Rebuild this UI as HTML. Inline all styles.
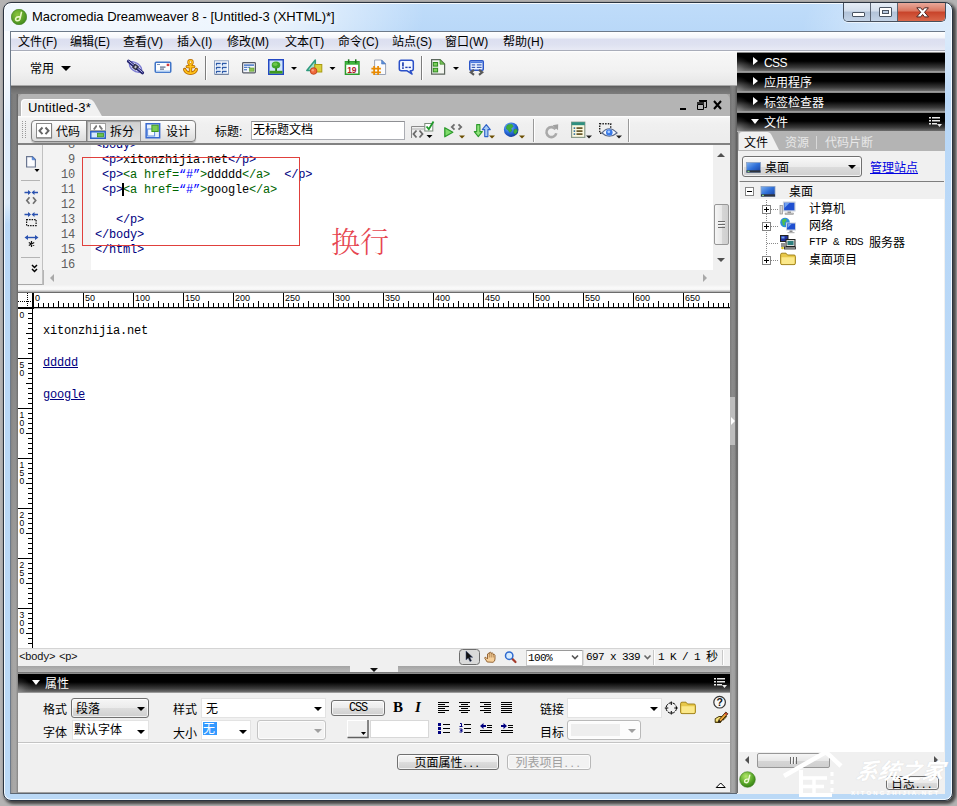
<!DOCTYPE html>
<html><head><meta charset="utf-8"><title>Macromedia Dreamweaver 8</title>
<style>
*{box-sizing:border-box;margin:0;padding:0}
html,body{width:957px;height:806px;overflow:hidden}
body{position:relative;background:#fff;font-family:"Liberation Sans","Noto Sans CJK SC",sans-serif;font-size:12px;color:#000}
.a{position:absolute}
.cj{font-family:"Liberation Sans","Noto Sans CJK SC",sans-serif;font-size:12px;white-space:nowrap;line-height:14px}
.mono{font-family:"Liberation Mono","Noto Sans CJK SC",monospace;white-space:pre}
#shadow{left:0;top:0;width:957px;height:806px;background:#b4b3b3}
#win{left:3px;top:2px;width:950px;height:799px;border:1px solid #2b3440;border-radius:8px;background:linear-gradient(180deg,rgba(255,255,255,.62) 0,rgba(255,255,255,.5) 172px,rgba(255,255,255,0) 194px) 0 28px/7px 100% no-repeat,radial-gradient(ellipse 150px 70px at 100% 26px,rgba(255,255,255,.5) 0,rgba(255,255,255,.35) 50%,rgba(255,255,255,0) 100%),radial-gradient(ellipse 330px 110px at 90px 12px,rgba(255,255,255,.82) 0,rgba(255,255,255,.72) 55%,rgba(255,255,255,0) 100%),linear-gradient(180deg,#bfdcfa 0,#b9d8f8 28px,#bbd9f6 100%);box-shadow:inset 0 0 0 1px rgba(255,255,255,.8),2px 2px 3px 1px rgba(0,0,0,.62)}
#client{left:10px;top:31px;width:935px;height:763px;background:#a2a1a0;border:1px solid #6d7a8a;border-bottom-color:#5c6672}

#title{left:32px;top:9px;font-size:12px;line-height:16px;white-space:nowrap;color:#000;text-shadow:0 0 6px #fff,0 0 6px #fff}
#appicon{left:11px;top:9px;width:16px;height:16px}
#capbtn{left:843px;top:3px;width:103px;height:19px;border:1px solid #46505e;border-top:none;border-radius:0 0 5px 5px;overflow:hidden;box-shadow:0 1px 0 rgba(255,255,255,.6)}
#capbtn div{position:absolute;top:0;height:18px}
#bmin{left:0;width:27px;background:linear-gradient(180deg,#e6edf6 0,#d3deec 45%,#b2c3d9 50%,#c3d3e6 100%);border-right:1px solid #5a6472}
#bmax{left:27px;width:27px;background:linear-gradient(180deg,#e6edf6 0,#d3deec 45%,#b2c3d9 50%,#c3d3e6 100%);border-right:1px solid #5a6472}
#bclose{left:54px;width:47px;background:linear-gradient(180deg,#e9a99b 0,#d9765f 45%,#c8432a 50%,#d9674a 100%)}
#menubar{left:11px;top:32px;width:934px;height:19px;background:linear-gradient(180deg,#ffffff 0,#f3f5fa 6px,#dcdff0 7px,#dfe2f1 13px,#e8eaf5 18px);border-bottom:1px solid #a9adba;box-shadow:0 1px 0 #f6f6fa}
#menubar span{position:absolute;top:3px;line-height:14px}
#insbar{left:11px;top:51px;width:726px;height:35px;background:linear-gradient(180deg,#ffffff 0,#f7f7f7 2px,#f1f1f1 60%,#e6e6e6 100%);border-bottom:1px solid #a8a8a8}

#title{font-size:13px}
/* insert bar */
#insbar .lbl{left:19px;top:11px}
.sep{width:1px;background:#8e8e8e;box-shadow:1px 0 0 #fff}
.dd{width:0;height:0;border-left:3px solid transparent;border-right:3px solid transparent;border-top:3px solid #000}
/* document window */
#doc{left:18px;top:93px;width:712px;height:573px;background:#b4b4b4;border-radius:7px 7px 0 0;overflow:hidden}
#doctab{left:3px;top:6px;width:90px;height:19px}
#doctb{left:0;top:23px;width:712px;height:29px;background:linear-gradient(180deg,#ffffff 0,#f4f4f4 2px,#f0f0f0 30%,#ececec 100%);border-bottom:2px solid #828282}
#grip{left:4px;top:5px;width:4px;height:18px;background:linear-gradient(90deg,#9a9a9a 0,#9a9a9a 1px,transparent 1px,transparent 3px,#9a9a9a 3px,#9a9a9a 4px);-webkit-mask-image:repeating-linear-gradient(180deg,#000 0,#000 1px,transparent 1px,transparent 2px);mask-image:repeating-linear-gradient(180deg,#000 0,#000 1px,transparent 1px,transparent 2px)}
#vbtns{left:13px;top:4px;width:165px;height:22px;border:1px solid #7f7f7f;border-radius:4px;background:linear-gradient(180deg,#fdfdfd 0,#ededed 50%,#dcdcdc 100%);box-shadow:0 1px 1px rgba(0,0,0,.25)}
#vbtns .p{left:54px;top:0;width:55px;height:20px;background:linear-gradient(180deg,#d0d0d0 0,#e2e2e2 100%);border-left:1px solid #7f7f7f;border-right:1px solid #9a9a9a;box-shadow:inset 1px 1px 1px rgba(0,0,0,.25)}
#vbtns span{position:absolute;top:4px;line-height:14px}
#tinput{left:233px;top:5px;width:154px;height:19px;background:#fff;border:1px solid #abadb3;border-top-color:#8e8f93;padding:1px 0 0 1px;line-height:14px}
#codetb{left:0;top:52px;width:25px;height:140px;background:#f0f0f0;border-right:1px solid #c0c0c0;border-bottom:1px solid #a8a8a8}
#gutter{left:25px;top:52px;width:48px;height:125px;background:#f3f3f3;overflow:hidden}
#code{left:73px;top:52px;width:622px;height:125px;background:#fff;overflow:hidden}
.ln{position:absolute;right:16px;width:30px;text-align:right;font-family:"Liberation Mono",monospace;font-size:12px;letter-spacing:-.2px;line-height:15px;color:#5e5e5e}
.cl{position:absolute;left:4px;font-family:"Liberation Mono",monospace;font-size:12px;letter-spacing:-.2px;line-height:15px;white-space:pre;color:#000}
.t{color:#000080}.g{color:#006400}.b{color:#0000ff}
#cvs{left:695px;top:52px;width:17px;height:125px;background:#f0f0f0}
#chs{left:26px;top:177px;width:686px;height:15px;background:#f0f0f0}
#split{left:0;top:192px;width:712px;height:7px;background:linear-gradient(180deg,#f2f2f2 0,#fafafa 3px,#f4f4f4 5px,#b8b8b8 6px)}
#hruler{left:0;top:199px;width:713px;height:17px;background:#fff;border-top:1px solid #404040;border-bottom:1px solid #404040;overflow:hidden}
#vruler{left:0;top:215px;width:15px;height:341px;background:#fff;border-right:1px solid #404040;overflow:hidden}
#design{left:15px;top:216px;width:697px;height:339px;background:#fff;overflow:hidden}
#design div{position:absolute;left:10px;font-family:"Liberation Mono",monospace;font-size:12px;letter-spacing:-.2px;line-height:15px;white-space:pre}
#design a{color:#000080;text-decoration:underline}
#status{left:0;top:555px;width:712px;height:18px;background:#f0f0f0;border-top:1px solid #d4d4d4}

/* right panel */
#rp{left:737px;top:52px;width:208px;height:742px;background:#f0f0f0;overflow:hidden}
.ph{position:absolute;left:0;width:208px;height:20px;background:radial-gradient(ellipse 15px 15px at 0 100%,rgba(150,150,150,.75) 0,rgba(120,120,120,.35) 55%,rgba(0,0,0,0) 100%),linear-gradient(180deg,#000 0,#000 45%,#3a3a3a 80%,#6e6e6e 100%);border-top:1px solid #8c8c8c;border-bottom:1px solid #9a9a9a;color:#fff}
.ph span{position:absolute;left:27px;top:3px;line-height:14px}
.ph i{position:absolute}
.tr{width:0;height:0;border-top:4.5px solid transparent;border-bottom:4.5px solid transparent;border-left:5.5px solid #fff;left:16px;top:4px}
.td{width:0;height:0;border-left:4.5px solid transparent;border-right:4.5px solid transparent;border-top:5.5px solid #fff;left:14px;top:6px}
#rtabs{left:0;top:79px;width:208px;height:20px;background:#b4b4b4}
#rsel{left:5px;top:104px;width:120px;height:21px;border:1px solid #707070;border-radius:3px;background:linear-gradient(180deg,#f8f8f8 0,#ebebeb 50%,#dcdcdc 51%,#d0d0d0 100%);box-shadow:inset 0 0 0 1px rgba(255,255,255,.7)}
#tree{left:2px;top:129px;width:205px;height:571px;background:#fff;border-top:1px solid #7e7e7e;border-left:1px solid #fbfbfb}
#tree .row{position:absolute;left:0;width:204px;height:17px}
#tree span{position:absolute;top:3px;line-height:15px}
#rhs{left:3px;top:700px;width:204px;height:17px;background:#f0f0f0}
/* props */
#props{left:18px;top:673px;width:712px;height:119px;background:#f0f0f0}
#props .ph{width:712px}
.lb{position:absolute;line-height:14px}
.cb{position:absolute;height:20px;background:#fff;border:1px solid #e3e3e3}
.cb .dd,.btn .dd{position:absolute;border-left-width:4px;border-right-width:4px;border-top-width:4px}
.btn{position:absolute;border:1px solid #707070;border-radius:3px;background:linear-gradient(180deg,#f6f6f6 0,#ebebeb 50%,#dddddd 51%,#cfcfcf 100%);box-shadow:inset 0 0 0 1px rgba(255,255,255,.7);text-align:center}
.sarr{position:absolute;width:0;height:0}
.thumb{position:absolute;border:1px solid #979797;border-radius:2px;background:linear-gradient(90deg,#f5f5f5 0,#e8e8e8 50%,#d6d6d6 51%,#cfcfcf 100%)}
.thumbh{position:absolute;border:1px solid #979797;border-radius:2px;background:linear-gradient(180deg,#f5f5f5 0,#e8e8e8 50%,#d6d6d6 51%,#cfcfcf 100%)}
#wshade{left:11px;top:86px;width:726px;height:8px;background:linear-gradient(180deg,#5a5a5a 0,#6e6e6e 35%,#7c7c7c 100%)}
#lgut{left:11px;top:94px;width:7px;height:699px;background:linear-gradient(90deg,rgba(0,0,0,.08) 0,rgba(0,0,0,0) 30%,rgba(0,0,0,0) 70%,rgba(0,0,0,.22) 100%),linear-gradient(180deg,#7e7e7e 0,#858585 250px,#a6a5a4 560px,#a9a8a7 100%)}
#vsplit{left:730px;top:86px;width:7px;height:707px;background:linear-gradient(90deg,rgba(0,0,0,.1) 0,rgba(0,0,0,0) 35%,rgba(0,0,0,.04) 65%,rgba(0,0,0,.3) 100%),linear-gradient(180deg,#808080 0,#8a8a8a 300px,#a4a4a4 580px,#a8a8a8 100%)}
#hsplit{left:18px;top:666px;width:712px;height:7px;background:linear-gradient(180deg,#a4a4a4 0,#b8b8b8 80%,#555 100%)}
</style></head><body>
<div id="shadow" class="a"></div>
<div id="win" class="a"></div>
<div id="client" class="a"></div>

<svg id="appicon" class="a" viewBox="0 0 15 15"><defs><radialGradient id="gi" cx="40%" cy="35%" r="70%"><stop offset="0" stop-color="#8cc63f"/><stop offset="1" stop-color="#3f8a1c"/></radialGradient></defs><circle cx="7.5" cy="7.5" r="7.2" fill="url(#gi)" stroke="#3a7a1a" stroke-width=".6"/><path d="M9.8 3.2 L8.3 9.6 Q7.6 11.4 5.6 11 Q3.9 10.5 4.4 8.9 Q5 7.4 6.8 7.4 L8.6 7.4" fill="none" stroke="#eaf7c8" stroke-width="1.5" stroke-linecap="round"/></svg>
<div id="title" class="a">Macromedia Dreamweaver 8 - [Untitled-3 (XHTML)*]</div>
<div id="capbtn" class="a"><div id="bmin"></div><div id="bmax"></div><div id="bclose"></div>
<svg class="a" style="left:0;top:0" width="101" height="18" viewBox="0 0 101 18"><rect x="8.500" y="9.500" width="12" height="4" rx=".5" fill="#fff" stroke="#4a5462"/><rect x="35.500" y="4.500" width="12" height="9" rx=".5" fill="#fff" stroke="#4a5462"/><rect x="38.500" y="7.500" width="6" height="3" fill="#b9cadf" stroke="#4a5462"/><path d="M72.800 4.800h3.900l1.900 2.400 1.900-2.400h3.900l-3.900 4.500 4 4.600h-4l-1.900-2.500-1.900 2.500h-4l4-4.600z" fill="#fff" stroke="#4a2420" stroke-width="1" stroke-linejoin="round"/></svg></div>
<div id="menubar" class="a cj"><span style="left:7px">文件(F)</span><span style="left:59px">编辑(E)</span><span style="left:112px">查看(V)</span><span style="left:166px">插入(I)</span><span style="left:216px">修改(M)</span><span style="left:274px">文本(T)</span><span style="left:327px">命令(C)</span><span style="left:381px">站点(S)</span><span style="left:434px">窗口(W)</span><span style="left:492px">帮助(H)</span></div>
<div id="insbar" class="a cj"><span class="a lbl">常用</span></div>

<div id="doc" class="a">
 <svg id="doctab" class="a" viewBox="0 0 90 19"><path d="M0 19 L0 4 Q0 0 4 0 L68 0 Q71 0 73 3 L82 19 Z" fill="#f1f1f1"/><path d="M0.500 19 L0.500 4 Q0.500 .5 4 .5 L68 .5" fill="none" stroke="#fff"/></svg>
 <div class="a" style="left:10px;top:7px;font-size:13px;letter-spacing:.2px;line-height:15px;white-space:nowrap">Untitled-3*</div>
 <svg class="a" style="left:660px;top:5px" width="48" height="14" viewBox="0 0 48 14"><rect x="2" y="10" width="6" height="2" fill="#000"/><path d="M21.500 3.500 h7 v6 h-2 M19.500 6.500 h6 v5 h-6 z" fill="none" stroke="#000"/><path d="M19 5 h7 M21 2.800 h8" stroke="#000" stroke-width="1.600"/><path d="M36 3 l7 8 M43 3 l-7 8" stroke="#000" stroke-width="2"/></svg>
 <div id="doctb" class="a">
  <div id="grip" class="a"></div>
  <div id="vbtns" class="a cj"><div class="a p"></div><span style="left:24px">代码</span><span style="left:78px">拆分</span><span style="left:134px">设计</span></div>
  <div class="a cj" style="left:197px;top:9px">标题:</div>
  <div id="tinput" class="a cj">无标题文档</div>
 </div>
 <div id="codetb" class="a"></div>
 <div id="gutter" class="a">
  <div class="ln" style="top:-7px">8</div><div class="ln" style="top:8px">9</div><div class="ln" style="top:23px">10</div><div class="ln" style="top:38px">11</div><div class="ln" style="top:53px">12</div><div class="ln" style="top:68px">13</div><div class="ln" style="top:83px">14</div><div class="ln" style="top:98px">15</div><div class="ln" style="top:113px">16</div>
 </div>
 <div id="code" class="a">
  <div class="cl" style="top:-7px"><span class="t">&lt;body&gt;</span></div>
  <div class="cl" style="top:8px"> <span class="t">&lt;p&gt;</span>xitonzhijia.net<span class="t">&lt;/p&gt;</span></div>
  <div class="cl" style="top:23px"> <span class="t">&lt;p&gt;</span><span class="g">&lt;a href=<span class="b">“#”</span>&gt;</span>ddddd<span class="g">&lt;/a&gt;</span>  <span class="t">&lt;/p&gt;</span></div>
  <div class="cl" style="top:38px"> <span class="t">&lt;p&gt;</span><span class="g">&lt;a href=<span class="b">“#”</span>&gt;</span>google<span class="g">&lt;/a&gt;</span></div>
  <div class="cl" style="top:68px">   <span class="t">&lt;/p&gt;</span></div>
  <div class="cl" style="top:83px"><span class="t">&lt;/body&gt;</span></div>
  <div class="cl" style="top:98px"><span class="t">&lt;/html&gt;</span></div>
  <div class="a" style="left:31px;top:38px;width:1.500px;height:13px;background:#000"></div>
 </div>
 <div id="cvs" class="a"><i class="sarr" style="left:4px;top:8px;border-left:4px solid transparent;border-right:4px solid transparent;border-bottom:4px solid #505050"></i><div class="thumb" style="left:1px;top:59px;width:15px;height:41px"></div><div class="a" style="left:5px;top:76px;width:7px;height:7px;background:repeating-linear-gradient(180deg,#6a6a6a 0,#6a6a6a 1px,#f4f4f4 1px,#f4f4f4 2px,transparent 2px,transparent 3px)"></div><i class="sarr" style="left:4px;top:113px;border-left:4px solid transparent;border-right:4px solid transparent;border-top:4px solid #505050"></i></div>
 <div id="chs" class="a"><i class="sarr" style="left:6px;top:4px;border-top:4px solid transparent;border-bottom:4px solid transparent;border-right:4px solid #a8a8a8"></i><i class="sarr" style="left:659px;top:4px;border-top:4px solid transparent;border-bottom:4px solid transparent;border-left:4px solid #a8a8a8"></i></div>
 <div class="a" style="left:64px;top:64px;width:218px;height:89px;border:1px solid #e0403c"></div>
 <div class="a" style="left:313px;top:133px;font-family:'Liberation Serif','Noto Serif CJK SC',serif;font-size:29px;font-weight:300;line-height:34px;color:#e64650;white-space:nowrap">换行</div>
 <div id="split" class="a"></div>
 <div id="design" class="a">
  <div style="top:15px">xitonzhijia.net</div>
  <div style="top:47px"><a>ddddd</a></div>
  <div style="top:79px"><a>google</a></div>
 </div>
 <div id="status" class="a">
  <span class="a" style="left:1px;top:1px;font-family:'Liberation Mono',monospace;font-size:11px;letter-spacing:-.6px;line-height:15px;white-space:pre;color:#111">&lt;body&gt;</span><span class="a" style="left:41px;top:1px;font-family:'Liberation Mono',monospace;font-size:11px;letter-spacing:-.6px;line-height:15px;white-space:pre;color:#111">&lt;p&gt;</span>
  <div class="a" style="left:508px;top:1px;width:57px;height:16px;background:#fff;border:1px solid #c8c8c8;border-top-color:#9a9a9a"><span class="a" style="left:1px;top:0;font-family:'Liberation Mono',monospace;font-size:11px;letter-spacing:-.6px;line-height:14px">100%</span></div>
  <span class="a" style="left:568px;top:1px;font-family:'Liberation Mono',monospace;font-size:11px;letter-spacing:-.6px;line-height:15px;white-space:pre">697 x 339</span>
  <span class="a" style="left:640px;top:1px;font-family:'Liberation Mono',monospace;font-size:11px;letter-spacing:-.6px;line-height:15px;white-space:pre">1 K / 1</span><span class="a cj" style="left:688px;top:1px">秒</span>
 </div>
</div>

<div id="rp" class="a cj">
 <div class="ph" style="top:0"><i class="tr"></i><span style="letter-spacing:-.6px">CSS</span></div>
 <div class="ph" style="top:20px"><i class="tr"></i><span>应用程序</span></div>
 <div class="ph" style="top:40px"><i class="tr"></i><span>标签检查器</span></div>
 <div class="ph" style="top:60px"><i class="td"></i><span>文件</span></div>
 <div id="rtabs" class="a">
  <svg class="a" style="left:2px;top:1px" width="50" height="18" viewBox="0 0 50 18"><path d="M0 18 L0 3 Q0 0 3 0 L28 0 Q31 0 32.500 3 L40 18 Z" fill="#f0f0f0"/></svg>
  <span class="a" style="left:7px;top:5px;line-height:14px">文件</span>
  <span class="a" style="left:48px;top:5px;line-height:14px;color:#e8e8e8">资源</span>
  <span class="a" style="left:88px;top:5px;line-height:14px;color:#e8e8e8">代码片断</span>
  <div class="a" style="left:79px;top:5px;width:1px;height:13px;background:#d8d8d8"></div>
 </div>
 <div id="rsel" class="a"><span class="a" style="left:22px;top:4px;line-height:15px">桌面</span><i class="a dd" style="left:105px;top:8px;border-left-width:4px;border-right-width:4px;border-top-width:4px"></i></div>
 <span class="a" style="left:133px;top:109px;line-height:14px;color:#0000e0;text-decoration:underline">管理站点</span>
 <div id="tree" class="a">
  <div class="row" style="top:0;background:#f0f0f0"><span style="left:49px">桌面</span></div>
  <div class="row" style="top:17px"><span style="left:69px">计算机</span></div>
  <div class="row" style="top:34px"><span style="left:69px">网络</span></div>
  <div class="row" style="top:51px"><span style="left:69px;top:2px;font-family:'Liberation Mono',monospace;font-size:11px;letter-spacing:-.6px;white-space:pre">FTP &amp; RDS</span><span style="left:129px">服务器</span></div>
  <div class="row" style="top:68px"><span style="left:69px">桌面项目</span></div>
 </div>
 <div id="rhs" class="a"><i class="sarr" style="left:5px;top:4px;border-top:4px solid transparent;border-bottom:4px solid transparent;border-right:4px solid #505050"></i><div class="thumbh" style="left:17px;top:1px;width:73px;height:15px"></div><div class="a" style="left:50px;top:5px;width:7px;height:7px;background:repeating-linear-gradient(90deg,#6a6a6a 0,#6a6a6a 1px,#f4f4f4 1px,#f4f4f4 2px,transparent 2px,transparent 3px)"></div><i class="sarr" style="left:194px;top:4px;border-top:4px solid transparent;border-bottom:4px solid transparent;border-left:4px solid #505050"></i></div>
 <div class="btn" style="left:149px;top:724px;width:53px;height:14px;line-height:14px;font-size:12px">日志<span style="letter-spacing:2.7px;margin-left:1px">...</span></div>
</div>
<div id="props" class="a cj">
 <div class="ph" style="top:0"><i class="td"></i><span>属性</span></div>
 <span class="lb" style="left:25px;top:30px">格式</span>
 <div class="btn" style="left:53px;top:25px;width:78px;height:20px"><span class="lb" style="left:4px;top:3px">段落</span><i class="dd" style="left:65px;top:8px"></i></div>
 <span class="lb" style="left:25px;top:53px">字体</span>
 <div class="cb" style="left:54px;top:47px;width:77px"><span class="lb" style="left:1px;top:2px">默认字体</span><i class="dd" style="left:64px;top:9px"></i></div>
 <span class="lb" style="left:155px;top:30px">样式</span>
 <div class="cb" style="left:183px;top:25px;width:125px"><span class="lb" style="left:4px;top:3px">无</span><i class="dd" style="left:112px;top:8px"></i></div>
 <span class="lb" style="left:155px;top:54px">大小</span>
 <div class="cb" style="left:183px;top:47px;width:50px"><span class="lb" style="left:1px;top:1px;height:13px;width:14px;background:#3399ff;color:#fff;overflow:hidden">无</span><i class="dd" style="left:37px;top:9px"></i></div>
 <div class="btn" style="left:239px;top:47px;width:69px;height:20px;background:#f3f3f3;border-color:#c4c4c4"><i class="dd" style="left:56px;top:8px;border-top-color:#a0a0a0"></i></div>
 <div class="btn" style="left:313px;top:27px;width:54px;height:16px;font-family:'Liberation Mono',monospace;font-size:12px;line-height:14px;letter-spacing:-1.2px">CSS</div>
 <span class="lb" style="left:375px;top:26px;font-family:'Liberation Serif',serif;font-weight:bold;font-size:15px;line-height:16px">B</span>
 <span class="lb" style="left:397px;top:26px;font-family:'Liberation Serif',serif;font-weight:bold;font-style:italic;font-size:15px;line-height:16px">I</span>
 <div class="cb" style="left:352px;top:47px;width:59px;height:18px;border-color:#d8d8d8"></div>
 <span class="lb" style="left:522px;top:30px">链接</span>
 <div class="cb" style="left:549px;top:25px;width:95px"><i class="dd" style="left:82px;top:8px"></i></div>
 <span class="lb" style="left:522px;top:53px">目标</span>
 <div class="btn" style="left:549px;top:47px;width:74px;height:20px;background:#fcfcfc;border-color:#b9b9b9"><div class="a" style="left:3px;top:3px;width:49px;height:12px;background:#eeeeee"></div><i class="dd" style="left:60px;top:8px;border-top-color:#a0a0a0"></i></div>
 <div class="a" style="left:0;top:69px;width:712px;height:2px;background:#fff;border-top:1px solid #c4c4c4"></div>
 <div class="btn" style="left:379px;top:81px;width:102px;height:16px;line-height:17px">页面属性<span style="letter-spacing:2.7px;margin-left:1px">...</span></div>
 <div class="btn" style="left:489px;top:81px;width:84px;height:16px;line-height:17px;color:#a0a0a0;background:#f2f2f2;border-color:#b8b8b8">列表项目<span style="letter-spacing:2.7px;margin-left:1px">...</span></div>
</div>
<div id="wshade" class="a"></div>
<div id="lgut" class="a"></div>
<div id="vsplit" class="a"><div class="a" style="left:0;top:311px;width:5px;height:48px;background:#bdbdbd"></div><i class="sarr" style="left:1px;top:331px;border-top:4px solid transparent;border-bottom:4px solid transparent;border-left:4px solid #fff"></i></div>
<div class="a" style="left:737px;top:132px;width:1px;height:661px;background:#6e6e6e"></div>
<div id="hsplit" class="a"><div class="a" style="left:332px;top:0;width:48px;height:6px;background:#f0f0f0"></div><i class="sarr" style="left:352px;top:2px;border-left:4px solid transparent;border-right:4px solid transparent;border-top:4px solid #111"></i></div>
<svg class="a" style="left:18px;top:292px" width="712" height="17" viewBox="0 0 712 17"><rect x="0" y="0" width="713" height="16" fill="#fff"/><rect x="0" y="0" width="713" height="1" fill="#6c6c6c"/><rect x="0" y="15" width="713" height="1" fill="#000"/><rect x="0" y="15" width="16" height="2" fill="#000"/><rect x="14" y="1" width="2" height="16" fill="#000"/><path d="M20.5 11V15M25.5 11V15M30.5 11V15M35.5 11V15M40.5 9V15M45.5 11V15M50.5 11V15M55.5 11V15M60.5 11V15M65.5 1V15M70.5 11V15M75.5 11V15M80.5 11V15M85.5 11V15M90.5 9V15M95.5 11V15M100.5 11V15M105.5 11V15M110.5 11V15M115.5 1V15M120.5 11V15M125.5 11V15M130.5 11V15M135.5 11V15M140.5 9V15M145.5 11V15M150.5 11V15M155.5 11V15M160.5 11V15M165.5 1V15M170.5 11V15M175.5 11V15M180.5 11V15M185.5 11V15M190.5 9V15M195.5 11V15M200.5 11V15M205.5 11V15M210.5 11V15M215.5 1V15M220.5 11V15M225.5 11V15M230.5 11V15M235.5 11V15M240.5 9V15M245.5 11V15M250.5 11V15M255.5 11V15M260.5 11V15M265.5 1V15M270.5 11V15M275.5 11V15M280.5 11V15M285.5 11V15M290.5 9V15M295.5 11V15M300.5 11V15M305.5 11V15M310.5 11V15M315.5 1V15M320.5 11V15M325.5 11V15M330.5 11V15M335.5 11V15M340.5 9V15M345.5 11V15M350.5 11V15M355.5 11V15M360.5 11V15M365.5 1V15M370.5 11V15M375.5 11V15M380.5 11V15M385.5 11V15M390.5 9V15M395.5 11V15M400.5 11V15M405.5 11V15M410.5 11V15M415.5 1V15M420.5 11V15M425.5 11V15M430.5 11V15M435.5 11V15M440.5 9V15M445.5 11V15M450.5 11V15M455.5 11V15M460.5 11V15M465.5 1V15M470.5 11V15M475.5 11V15M480.5 11V15M485.5 11V15M490.5 9V15M495.5 11V15M500.5 11V15M505.5 11V15M510.5 11V15M515.5 1V15M520.5 11V15M525.5 11V15M530.5 11V15M535.5 11V15M540.5 9V15M545.5 11V15M550.5 11V15M555.5 11V15M560.5 11V15M565.5 1V15M570.5 11V15M575.5 11V15M580.5 11V15M585.5 11V15M590.5 9V15M595.5 11V15M600.5 11V15M605.5 11V15M610.5 11V15M615.5 1V15M620.5 11V15M625.5 11V15M630.5 11V15M635.5 11V15M640.5 9V15M645.5 11V15M650.5 11V15M655.5 11V15M660.5 11V15M665.5 1V15M670.5 11V15M675.5 11V15M680.5 11V15M685.5 11V15M690.5 9V15M695.5 11V15M700.5 11V15M705.5 11V15M710.5 11V15" stroke="#000" stroke-width="1" fill="none"/><text x="17" y="9" font-family="Liberation Sans,sans-serif" font-size="9" fill="#000">0</text><text x="67" y="9" font-family="Liberation Sans,sans-serif" font-size="9" fill="#000">50</text><text x="117" y="9" font-family="Liberation Sans,sans-serif" font-size="9" fill="#000">100</text><text x="167" y="9" font-family="Liberation Sans,sans-serif" font-size="9" fill="#000">150</text><text x="217" y="9" font-family="Liberation Sans,sans-serif" font-size="9" fill="#000">200</text><text x="267" y="9" font-family="Liberation Sans,sans-serif" font-size="9" fill="#000">250</text><text x="317" y="9" font-family="Liberation Sans,sans-serif" font-size="9" fill="#000">300</text><text x="367" y="9" font-family="Liberation Sans,sans-serif" font-size="9" fill="#000">350</text><text x="417" y="9" font-family="Liberation Sans,sans-serif" font-size="9" fill="#000">400</text><text x="467" y="9" font-family="Liberation Sans,sans-serif" font-size="9" fill="#000">450</text><text x="517" y="9" font-family="Liberation Sans,sans-serif" font-size="9" fill="#000">500</text><text x="567" y="9" font-family="Liberation Sans,sans-serif" font-size="9" fill="#000">550</text><text x="617" y="9" font-family="Liberation Sans,sans-serif" font-size="9" fill="#000">600</text><text x="667" y="9" font-family="Liberation Sans,sans-serif" font-size="9" fill="#000">650</text><text x="717" y="9" font-family="Liberation Sans,sans-serif" font-size="9" fill="#000">700</text><path d="M0 9.500H13M9.500 1V14" stroke="#000" stroke-width="1" stroke-dasharray="1 1" fill="none"/></svg><svg class="a" style="left:18px;top:308px" width="15" height="340" viewBox="0 0 15 340"><rect width="15" height="340" fill="#fff"/><rect x="14" y="0" width="1" height="340" fill="#000"/><rect x="0" y="0" width="15" height="1" fill="#000"/><path d="M10 5.5H14M10 10.5H14M10 15.5H14M10 20.5H14M8 25.5H14M10 30.5H14M10 35.5H14M10 40.5H14M10 45.5H14M0 50.5H14M10 55.5H14M10 60.5H14M10 65.5H14M10 70.5H14M8 75.5H14M10 80.5H14M10 85.5H14M10 90.5H14M10 95.5H14M0 100.5H14M10 105.5H14M10 110.5H14M10 115.5H14M10 120.5H14M8 125.5H14M10 130.5H14M10 135.5H14M10 140.5H14M10 145.5H14M0 150.5H14M10 155.5H14M10 160.5H14M10 165.5H14M10 170.5H14M8 175.5H14M10 180.5H14M10 185.5H14M10 190.5H14M10 195.5H14M0 200.5H14M10 205.5H14M10 210.5H14M10 215.5H14M10 220.5H14M8 225.5H14M10 230.5H14M10 235.5H14M10 240.5H14M10 245.5H14M0 250.5H14M10 255.5H14M10 260.5H14M10 265.5H14M10 270.5H14M8 275.5H14M10 280.5H14M10 285.5H14M10 290.5H14M10 295.5H14M0 300.5H14M10 305.5H14M10 310.5H14M10 315.5H14M10 320.5H14M8 325.5H14M10 330.5H14M10 335.5H14M10 340.5H14" stroke="#000" stroke-width="1" fill="none"/><text x="1.500" y="10" font-family="Liberation Sans,sans-serif" font-size="8.500" fill="#000">0</text><text x="1.500" y="60" font-family="Liberation Sans,sans-serif" font-size="8.500" fill="#000">5</text><text x="1.500" y="68" font-family="Liberation Sans,sans-serif" font-size="8.500" fill="#000">0</text><text x="1.500" y="110" font-family="Liberation Sans,sans-serif" font-size="8.500" fill="#000">1</text><text x="1.500" y="118" font-family="Liberation Sans,sans-serif" font-size="8.500" fill="#000">0</text><text x="1.500" y="126" font-family="Liberation Sans,sans-serif" font-size="8.500" fill="#000">0</text><text x="1.500" y="160" font-family="Liberation Sans,sans-serif" font-size="8.500" fill="#000">1</text><text x="1.500" y="168" font-family="Liberation Sans,sans-serif" font-size="8.500" fill="#000">5</text><text x="1.500" y="176" font-family="Liberation Sans,sans-serif" font-size="8.500" fill="#000">0</text><text x="1.500" y="210" font-family="Liberation Sans,sans-serif" font-size="8.500" fill="#000">2</text><text x="1.500" y="218" font-family="Liberation Sans,sans-serif" font-size="8.500" fill="#000">0</text><text x="1.500" y="226" font-family="Liberation Sans,sans-serif" font-size="8.500" fill="#000">0</text><text x="1.500" y="260" font-family="Liberation Sans,sans-serif" font-size="8.500" fill="#000">2</text><text x="1.500" y="268" font-family="Liberation Sans,sans-serif" font-size="8.500" fill="#000">5</text><text x="1.500" y="276" font-family="Liberation Sans,sans-serif" font-size="8.500" fill="#000">0</text><text x="1.500" y="310" font-family="Liberation Sans,sans-serif" font-size="8.500" fill="#000">3</text><text x="1.500" y="318" font-family="Liberation Sans,sans-serif" font-size="8.500" fill="#000">0</text><text x="1.500" y="326" font-family="Liberation Sans,sans-serif" font-size="8.500" fill="#000">0</text></svg>
<svg class="a" style="left:780px;top:748px;pointer-events:none" width="70" height="52" viewBox="0 0 70 52"><g fill="none" stroke="#fff" stroke-linejoin="miter"><path d="M4 28 L46 4 L61 18" stroke-width="4.500"/><path d="M21 22 V47 H52" stroke-width="4"/><path d="M21 30 H47 M21 38.500 H44" stroke-width="3.500"/><path d="M34 30 V46" stroke-width="3.500"/><path d="M52 24 v4 M52 32 v4 M52 40 v4" stroke-width="3"/></g></svg>
<div class="a" style="left:856px;top:758px;width:92px;font-family:'Liberation Sans','Noto Sans CJK SC',sans-serif;font-weight:bold;font-style:italic;font-size:22px;line-height:28px;color:#fff;white-space:nowrap;letter-spacing:0;text-shadow:0 0 1px rgba(190,190,190,.6);pointer-events:none;transform:skewX(-8deg)">系统之家</div>
<div class="a" style="left:851px;top:790px;font-size:6px;line-height:7px;letter-spacing:2.1px;color:#fff;font-weight:bold;white-space:nowrap;pointer-events:none">XITONGZHIJIA.NET</div>
<svg id="icons" class="a" style="left:0;top:0;pointer-events:none" width="957" height="806" viewBox="0 0 957 806"><path d="M61 66h10l-5.0 5z" fill="#000"/><g transform="translate(127.5 59.5)"><ellipse cx="8" cy="7.500" rx="7" ry="4" transform="rotate(36 8 7.500)" fill="#dadaf6" stroke="#7c7cd2" stroke-width="1.300"/>
<path d="M1 1.800L15 13.200" stroke="#23236e" stroke-width="3.200" stroke-linecap="round"/><path d="M1.200 1.500L14.800 12.600" stroke="#b9b9ee" stroke-width="1" stroke-linecap="round"/>
<rect x="5.800" y="5.300" width="4.400" height="4.400" transform="rotate(38 8 7.500)" fill="#3a3a44" stroke="#15153a" stroke-width=".6"/><rect x="7" y="6.500" width="2" height="2" transform="rotate(38 8 7.500)" fill="#c8c8d0"/></g><g transform="translate(154.5 61.5)"><rect x=".75" y=".75" width="15.500" height="10" rx="1" fill="#fbfdff" stroke="#3f74c8" stroke-width="1.500"/>
<rect x="1.500" y="9" width="14" height="1.600" fill="#a9c7ee"/>
<rect x="12.200" y="2.200" width="2.600" height="2.400" fill="#d43c3c"/><rect x="2.500" y="2.500" width="3" height="1" fill="#7a8fb5"/>
<rect x="5.500" y="5" width="5.500" height="1.200" fill="#5c6a86"/><rect x="5.500" y="7" width="4" height="1.200" fill="#5c6a86"/></g><g transform="translate(182.7 59)"><g fill="none" stroke="#b86a00" stroke-width="3.400" stroke-linecap="round" stroke-linejoin="round"><circle cx="7.800" cy="3.200" r="1.900" stroke-width="2.600"/><path d="M7.800 5.500V13.500M4.600 7.600H11M2 10.500Q3 14 7.800 14.300Q12.600 14 13.600 10.500"/></g>
<g fill="none" stroke="#ffc21a" stroke-width="1.700" stroke-linecap="round" stroke-linejoin="round"><circle cx="7.800" cy="3.200" r="1.900" stroke-width="1.300"/><path d="M7.800 5.500V13.500M4.600 7.600H11M2 10.500Q3 14 7.800 14.300Q12.600 14 13.600 10.500"/></g><circle cx="7.800" cy="3.200" r=".9" fill="#fff3d0"/></g><rect x="205" y="56" width="1" height="24" fill="#7d7d7d"/><rect x="206" y="56" width="1" height="24" fill="#fff"/><g transform="translate(214 60.3)"><rect x=".5" y=".5" width="14" height="13.500" fill="#fdfeff" stroke="#8fa3c4"/><rect x="1" y="13.500" width="13.500" height="1.200" fill="#5f6f8c" opacity=".7"/>
<g stroke="#2d5aa8" stroke-width="1.300" fill="none"><path d="M2.500 5.200V3h4.200M8.500 5.200V3h4.200M2.500 9.200V7h4.200M8.500 9.200V7h4.200M2.500 13V11h4.200M8.500 13V11h4.200"/></g>
<g fill="#cfe0f7"><rect x="3.200" y="3.700" width="3.500" height="1.700"/><rect x="9.200" y="3.700" width="3.500" height="1.700"/><rect x="3.200" y="7.700" width="3.500" height="1.700"/><rect x="9.200" y="7.700" width="3.500" height="1.700"/><rect x="3.200" y="11.700" width="3.500" height="1.500"/><rect x="9.200" y="11.700" width="3.500" height="1.500"/></g></g><g transform="translate(242 62)"><rect x=".6" y=".6" width="12.800" height="10.300" rx=".8" fill="#f4f6fa" stroke="#555a66" stroke-width="1.200"/>
<rect x="2" y="2.400" width="10" height="1.400" fill="#3f6fc4"/><rect x="2" y="4.800" width="3.500" height="1.100" fill="#3f6fc4"/><rect x="6.200" y="4.800" width="2" height="1.100" fill="#3f6fc4"/><rect x="2" y="7.200" width="3" height="1.100" fill="#3f6fc4"/>
<rect x="7.500" y="6" width="4.500" height="3.200" fill="#8cc152" stroke="#5a9a2a" stroke-width=".6"/></g><g transform="translate(268 59)"><rect x=".75" y=".75" width="14.500" height="14.500" fill="#cfe4fb" stroke="#2348c4" stroke-width="1.500"/>
<rect x="1.500" y="11.800" width="13" height="2.800" fill="#3e9a1e"/><rect x="7.200" y="8" width="1.800" height="4" fill="#2f7a18"/>
<ellipse cx="8" cy="6" rx="4.300" ry="3.600" fill="#3fa52a"/><ellipse cx="7.200" cy="5.200" rx="2.300" ry="1.700" fill="#6cc64a"/></g><path d="M291 67h6l-3.0 3z" fill="#000"/><g transform="translate(305.8 59)"><path d="M1 11.500 L9.500 1 V11.500Z" fill="#9fe0cf" stroke="#2f9a7e" stroke-width="1.500" stroke-linejoin="round"/>
<rect x="9" y="5.500" width="7" height="7.500" fill="#d9cf3a" stroke="#a89a10" stroke-width="1"/>
<circle cx="7.800" cy="12" r="3.300" fill="#ef6a3c" stroke="#c2431c" stroke-width=".9"/><circle cx="7" cy="11.200" r="1.200" fill="#f9a07c"/></g><path d="M329.5 67h6l-3.0 3z" fill="#000"/><g transform="translate(344.7 59)"><rect x=".75" y="2.750" width="13.500" height="12.500" fill="#fff" stroke="#2d9a2d" stroke-width="1.500"/><rect x=".75" y="2.750" width="13.500" height="3" fill="#3fb53f"/>
<rect x="3.200" y=".3" width="1.500" height="4" fill="#1d6e1d"/><rect x="10.300" y=".3" width="1.500" height="4" fill="#1d6e1d"/>
<text x="2.600" y="13.600" font-family="Liberation Sans,sans-serif" font-weight="bold" font-size="8.500" fill="#b0182a" letter-spacing="-.3">19</text></g><g transform="translate(370.6 59.5)"><path d="M4 .5h7l4 4v10.500h-11z" fill="#fafbfd" stroke="#9aa3b5" stroke-width="1"/><path d="M11 .5v4h4z" fill="#5b8fd8" stroke="#4474c0" stroke-width=".6"/>
<path d="M3.500 6.500v9M7.500 6.500v9M.8 9.200h9.500M.8 12.800h9.500" stroke="#e88a00" stroke-width="1.700" fill="none"/></g><g transform="translate(398.3 59.5)"><path d="M2.500 .8h10.500q2 0 2 2v6.500q0 2-2 2h-1l1.800 3.200-5-3.200h-5.800q-2 0-2-2v-6.500q0-2 2-2z" fill="#f4f8ff" stroke="#2b50c8" stroke-width="1.500" stroke-linejoin="round"/>
<rect x="3.800" y="2.800" width="1.700" height="4.200" fill="#1f3fb0"/><rect x="3.800" y="7.800" width="1.700" height="1.600" fill="#1f3fb0"/><rect x="7" y="7.200" width="2.300" height="1.400" fill="#1f3fb0"/><rect x="10.300" y="7.200" width="2.300" height="1.400" fill="#1f3fb0"/></g><rect x="421" y="56" width="1" height="24" fill="#7d7d7d"/><rect x="422" y="56" width="1" height="24" fill="#fff"/><g transform="translate(431 59)"><path d="M.6 .6h8.500l4.500 4.500v10h-13z" fill="#f3f5f0" stroke="#5c665c" stroke-width="1.200"/><path d="M9 .6v4.600h4.600z" fill="#79c45a" stroke="#3d8a2a" stroke-width=".7"/>
<rect x="2.300" y="3.500" width="4.300" height="3.600" fill="#7ccf5a" stroke="#2f8a1f" stroke-width="1"/><rect x="2.300" y="9.300" width="4.300" height="3.600" fill="#7ccf5a" stroke="#2f8a1f" stroke-width="1"/></g><path d="M453 67h6l-3.0 3z" fill="#000"/><g transform="translate(468.5 60)"><rect x="1.250" y=".75" width="13.500" height="9.500" rx="1" fill="#eef4ff" stroke="#2b56c8" stroke-width="1.500"/><rect x="2" y="1.500" width="12" height="1.600" fill="#4a7ae0"/>
<rect x="3.200" y="4.300" width="3.500" height="1.200" fill="#3a5fb8"/><rect x="3.200" y="6.800" width="3.500" height="1.200" fill="#3a5fb8"/><rect x="8.300" y="4.300" width="4.800" height="1.200" fill="#3a5fb8"/><rect x="8.300" y="6.800" width="4.800" height="1.200" fill="#3a5fb8"/>
<path d="M5.500 9.800L2.300 12.300 5.500 14.800M10.500 9.800L13.700 12.300 10.500 14.800" fill="none" stroke="#5a5a5a" stroke-width="2.200"/></g><g transform="translate(36 123)"><rect x=".5" y=".5" width="15" height="14.500" fill="#fff" stroke="#8a8a8a"/><rect x="1" y="14" width="15" height="1.500" fill="#777" opacity=".6"/><rect x="15" y="1" width="1.200" height="14" fill="#777" opacity=".5"/>
<path d="M6.500 4.500L3.500 7.800 6.500 11.200M9.500 4.500L12.500 7.800 9.500 11.200" fill="none" stroke="#666" stroke-width="2"/></g><g transform="translate(90 123)"><rect x=".5" y=".5" width="15" height="7" fill="#fff" stroke="#a0a0a0"/><path d="M6.800 2.500L3.800 6.500M9.200 2.500L12.200 6.500" stroke="#777" stroke-width="2" fill="none"/><rect x="7" y="1" width="2" height="6" fill="#fff"/>
<rect x=".75" y="8.750" width="14.500" height="6.500" fill="#d6e8fb" stroke="#2f62c8" stroke-width="1.500"/><rect x="7.500" y="10.300" width="6" height="3.500" fill="#6cc24a" stroke="#3a8f22" stroke-width=".8"/></g><g transform="translate(145.4 123)"><rect x=".75" y=".75" width="13.500" height="14" fill="#e6f0fc" stroke="#3a6ad0" stroke-width="1.500"/>
<rect x="2.200" y="6" width="7" height="7" fill="#f7fbff" stroke="#5f8fe0" stroke-width="1"/><rect x="6.500" y="2.200" width="6.300" height="6.300" fill="#7acb52" stroke="#3d9626" stroke-width="1"/></g><g transform="translate(411 121)"><path d="M.5 17V5.500H14" fill="none" stroke="#8a8a8a" stroke-width="1"/><path d="M.5 8H13" stroke="#b0b0b0" stroke-width="1"/>
<path d="M5.500 9.500L2.500 13 5.500 16.500M8.500 9.500L11.500 13 8.500 16.500" fill="none" stroke="#6a6a6a" stroke-width="1.800"/>
<rect x="13.800" y="2.500" width="8" height="7.500" fill="#fff" stroke="#7a8a7a" stroke-width="1"/><path d="M15.500 5.500L17.800 8.200 22.500 .5" fill="none" stroke="#1f9a2a" stroke-width="1.800"/></g><path d="M426.5 135h6l-3.0 3z" fill="#000"/><g transform="translate(444 124)"><path d="M.8 3.800V12.800L8.800 8.300Z" fill="#7fdc6a" stroke="#2c9a2c" stroke-width="1.300" stroke-linejoin="round"/>
<path d="M10.500 .3L7.800 3 10.500 5.700M14.500 .3L17.200 3 14.500 5.700" fill="none" stroke="#6e6e6e" stroke-width="1.800"/></g><path d="M459 135.5h6l-3.0 3z" fill="#6b4e00"/><g transform="translate(474 124)"><path d="M2.700 .6h3.200v7h2.400l-4 5-4-5h2.400z" fill="#8fe27a" stroke="#2c9a2c" stroke-width="1.100" stroke-linejoin="round"/>
<path d="M10.700 12.600h3.200v-7h2.400l-4-5-4 5h2.400z" fill="#a9cdf5" stroke="#2f62c8" stroke-width="1.100" stroke-linejoin="round"/></g><path d="M489 135.5h6l-3.0 3z" fill="#6b4e00"/><g transform="translate(503.7 122)"><defs><radialGradient id="gl" cx="38%" cy="32%" r="70%"><stop offset="0" stop-color="#8fc4ff"/><stop offset=".55" stop-color="#2b6fe0"/><stop offset="1" stop-color="#123a9a"/></radialGradient></defs>
<circle cx="7.500" cy="7.700" r="7.300" fill="url(#gl)"/><path d="M3.500 3.200Q6 1.500 8.500 2.500L9.500 4.500 7.500 6.500 8 9 6 10.500 4.500 8 2.800 7Q2.300 4.800 3.500 3.200ZM10.500 7.500L13 7 13.800 9.500 11.500 12.500 10 10.500Z" fill="#3fae3a" stroke="#2a8a2a" stroke-width=".4"/></g><path d="M519 135.5h6l-3.0 3z" fill="#6b4e00"/><rect x="533" y="119" width="1" height="23" fill="#9a9a9a"/><rect x="534" y="119" width="1" height="23" fill="#fff"/><g transform="translate(544.7 124)"><path d="M10.800 5.200A5 5 0 1 0 11.600 9.300" fill="none" stroke="#a9a9a9" stroke-width="2.600"/><path d="M7.800 1.200L13.500 .2 13.300 6.200Z" fill="#a0a0a0"/></g><g transform="translate(571 121.6)"><rect x=".6" y=".6" width="13.200" height="15.200" fill="#fbf8e0" stroke="#8a9a8a" stroke-width="1.200"/><rect x=".6" y=".6" width="13.200" height="3" fill="#2f8f7f"/>
<rect x="2.600" y="5.700" width="1.600" height="1.600" fill="#2a6a9a"/><rect x="2.600" y="8.700" width="1.600" height="1.600" fill="#2a6a9a"/><rect x="2.600" y="11.700" width="1.600" height="1.600" fill="#2a6a9a"/>
<rect x="5.500" y="5.700" width="6" height="1.600" fill="#5a4a1a"/><rect x="5.500" y="8.700" width="6" height="1.600" fill="#5a4a1a"/><rect x="5.500" y="11.700" width="6" height="1.600" fill="#5a4a1a"/></g><path d="M586 135.5h6l-3.0 3z" fill="#222"/><g transform="translate(599 123)"><rect x=".7" y=".7" width="11" height="9.500" fill="none" stroke="#222" stroke-width="1.400" stroke-dasharray="1.500 1.200"/>
<path d="M3 10Q10 1.500 18 10Q10 16.500 3 10Z" fill="#f4f8ff" stroke="#5a6a8a" stroke-width="1.200"/><circle cx="10.300" cy="9.500" r="3.300" fill="#3a7ae8"/><circle cx="9.800" cy="8.800" r="1.400" fill="#a8ccff"/></g><path d="M616 135.5h6l-3.0 3z" fill="#222"/><rect x="628" y="119" width="1" height="23" fill="#9a9a9a"/><rect x="629" y="119" width="1" height="23" fill="#fff"/><g transform="translate(26 156)"><path d="M.6 .6h5.800l3 3v7.400h-8.800z" fill="#fbfcff" stroke="#6a7690" stroke-width="1.200"/><path d="M6.200 .6v3.200h3.200z" fill="#5b8fe0" stroke="#3f6fc4" stroke-width=".6"/></g><path d="M34.5 169h5l-2.5 3z" fill="#000"/><rect x="21" y="180" width="19" height="1" fill="#b4b4b4"/><rect x="21" y="257" width="19" height="1" fill="#b4b4b4"/><path d="M24.500 192.5h5M33 192.5h5" stroke="#2a52b0" stroke-width="1.400"/><path d="M28 190.0l3 2.500-3 2.500zM34.500 190.0l-3 2.500 3 2.500z" fill="#2a52b0"/><path d="M29.500 197.200L26.800 200.500 29.500 203.800M33 197.200L35.700 200.500 33 203.800" fill="none" stroke="#707070" stroke-width="1.700"/><path d="M24.500 214.5h5M33 214.5h5" stroke="#2a52b0" stroke-width="1.400"/><path d="M28 212.0l3 2.500-3 2.500zM34.500 212.0l-3 2.500 3 2.500z" fill="#2a52b0"/><rect x="26.600" y="219.600" width="9.500" height="6" fill="none" stroke="#111" stroke-width="1.200" stroke-dasharray="1.500 1"/><path d="M27 237.500h9" stroke="#2a52b0" stroke-width="1.400"/><path d="M28 235l-3.500 2.500 3.500 2.500zM35 235l3.500 2.500-3.500 2.500z" fill="#2a52b0"/><path d="M31.500 241v6M28.800 242.500l5.400 3M34.200 242.500l-5.400 3" stroke="#111" stroke-width="1.200"/><path d="M32 265l2.500 2.500 2.500-2.500M32 269l2.500 2.500 2.500-2.500" fill="none" stroke="#000" stroke-width="1.500"/><rect x="459.500" y="649.500" width="20" height="15" rx="3" fill="#dadada" stroke="#6e6e6e"/><path d="M466 651v9l2.200-2 1.800 3.600 1.500-.8-1.800-3.500h3z" fill="#111" stroke="#3a4a7a" stroke-width=".5"/><g transform="translate(484 651.5)"><path d="M3.200 10.500L.8 6.800Q.5 5.500 1.800 5.800L3.500 7.500V2.500Q4.300 1.200 5.200 2.500V1.300Q6.200 0 7.200 1.300V1.800Q8.300 .8 9.200 2.200V3Q10.500 2.300 11 3.800V7.500Q11 10 9 10.800Z" fill="#f6cf9a" stroke="#8a5a2a" stroke-width=".9" stroke-linejoin="round"/><path d="M5.300 2.500V6M7.200 1.800V6M9.200 2.800V6" stroke="#8a5a2a" stroke-width=".6"/></g><g transform="translate(504.5 651)"><path d="M7.500 7.500L11 11" stroke="#a33a2a" stroke-width="2.200" stroke-linecap="round"/><circle cx="4.700" cy="4.700" r="3.700" fill="#d6ecff" stroke="#2f6ad0" stroke-width="1.500"/></g><path d="M572 655.500l3 3 3-3" fill="none" stroke="#555" stroke-width="1.600"/><path d="M644.500 655.500l3 3 3-3" fill="none" stroke="#666" stroke-width="1.600"/><rect x="582.500" y="650" width="1" height="15" fill="#c8c8c8"/><rect x="653" y="650" width="1" height="15" fill="#c8c8c8"/><rect x="654" y="650" width="1" height="15" fill="#fff"/><rect x="722" y="650" width="1" height="15" fill="#c8c8c8"/><rect x="723" y="650" width="1" height="15" fill="#fff"/><rect x="438" y="702" width="11" height="1" fill="#000"/><rect x="438" y="704" width="7" height="1" fill="#000"/><rect x="438" y="706" width="11" height="1" fill="#000"/><rect x="438" y="708" width="7" height="1" fill="#000"/><rect x="438" y="710" width="11" height="1" fill="#000"/><rect x="438" y="712" width="7" height="1" fill="#000"/><rect x="459" y="702" width="11" height="1" fill="#000"/><rect x="461" y="704" width="7" height="1" fill="#000"/><rect x="459" y="706" width="11" height="1" fill="#000"/><rect x="461" y="708" width="7" height="1" fill="#000"/><rect x="459" y="710" width="11" height="1" fill="#000"/><rect x="461" y="712" width="7" height="1" fill="#000"/><rect x="480" y="702" width="11" height="1" fill="#000"/><rect x="484" y="704" width="7" height="1" fill="#000"/><rect x="480" y="706" width="11" height="1" fill="#000"/><rect x="484" y="708" width="7" height="1" fill="#000"/><rect x="480" y="710" width="11" height="1" fill="#000"/><rect x="484" y="712" width="7" height="1" fill="#000"/><rect x="501" y="702" width="11" height="1" fill="#000"/><rect x="501" y="704" width="11" height="1" fill="#000"/><rect x="501" y="706" width="11" height="1" fill="#000"/><rect x="501" y="708" width="11" height="1" fill="#000"/><rect x="501" y="710" width="11" height="1" fill="#000"/><rect x="501" y="712" width="11" height="1" fill="#000"/><rect x="438" y="723" width="3" height="3" fill="#000080"/><rect x="443" y="724" width="7" height="1" fill="#000"/><rect x="438" y="727" width="3" height="3" fill="#000080"/><rect x="443" y="728" width="7" height="1" fill="#000"/><rect x="438" y="731" width="3" height="3" fill="#000080"/><rect x="443" y="732" width="7" height="1" fill="#000"/><rect x="464" y="724" width="7" height="1" fill="#000"/><rect x="464" y="728" width="7" height="1" fill="#000"/><rect x="464" y="732" width="7" height="1" fill="#000"/><path d="M460 723.500h1.500v3M459.500 726.500h3M459.500 729h2.500v1.500h-1.500 1.500v1.500h-2.500" fill="none" stroke="#000080" stroke-width="1"/><rect x="487" y="725" width="5" height="1" fill="#000"/><rect x="487" y="727" width="5" height="1" fill="#000"/><rect x="480" y="730" width="12" height="1" fill="#000"/><rect x="480" y="732" width="12" height="1" fill="#000"/><path d="M480 726l3.500-3v2h2.500v2h-2.500v2z" fill="#000080"/><rect x="508" y="725" width="5" height="1" fill="#000"/><rect x="508" y="727" width="5" height="1" fill="#000"/><rect x="501" y="730" width="12" height="1" fill="#000"/><rect x="501" y="732" width="12" height="1" fill="#000"/><path d="M507 726l-3.500-3v2h-2.500v2h2.500v2z" fill="#000080"/><rect x="347.500" y="720.500" width="20" height="17" fill="#f0f0f0" stroke="#fff"/><path d="M347.500 737.500h20.500v-17.500" fill="none" stroke="#606060" stroke-width="1.500"/><path d="M361 732h5l-2.5 3z" fill="#000"/><circle cx="671.300" cy="708" r="5.200" fill="none" stroke="#000" stroke-width="1" stroke-dasharray="3.200 1"/><path d="M671.300 701.500v3.500M671.300 711v3.500M664.800 708h3.500M674.300 708h3.500" stroke="#000" stroke-width="1"/><g transform="translate(680 701.5)"><g transform="scale(1)"><path d="M.6 2.200Q.6 .7 2 .7h4l1.500 1.800h6.500q1.400 0 1.400 1.400v7q0 1.200-1.400 1.200h-12q-1.400 0-1.400-1.200z" fill="#e8c84a" stroke="#9a7a10" stroke-width=".9"/><path d="M1.500 4.800h13v5.800q0 1-1 1h-11q-1 0-1-1z" fill="#fbe88a"/></g></g><circle cx="719.600" cy="702.200" r="5.800" fill="#f8f8f8" stroke="#333" stroke-width="1.200"/><text x="716.600" y="706.200" font-family="Liberation Sans,sans-serif" font-weight="bold" font-size="10.500" fill="#111">?</text><g transform="translate(714.4 710.5)"><path d="M.8 8.200l3.800-2.200h7.600l-2.800 3.200h-2.200l-1 2.600h-5.400z" fill="#f6e27a" stroke="#4a3a08" stroke-width="1" stroke-linejoin="round"/><path d="M.8 11.800h5.400l1-2.600h2.200" fill="none" stroke="#4a3a08" stroke-width="1"/>
<path d="M4.600 9.200l6.800-7.600 2 1.700-6.800 7.600-2.600.8z" fill="#f0a83a" stroke="#2a1a08" stroke-width=".9" stroke-linejoin="round"/><path d="M10.600 2.500l2 1.700" stroke="#c0392b" stroke-width="1.600"/><path d="M4 11.700l.6-2.500 2 1.700z" fill="#222"/></g><path d="M716.200 787.500l4.500-4.500 4.500 4.500z" fill="#fff" stroke="#000" stroke-width="1"/><rect x="929" y="117" width="2" height="1.500" fill="#e8e8e8"/><rect x="932" y="117" width="8" height="1.500" fill="#e8e8e8"/><rect x="929" y="120" width="2" height="1.500" fill="#e8e8e8"/><rect x="932" y="120" width="8" height="1.500" fill="#e8e8e8"/><rect x="929" y="123" width="2" height="1.500" fill="#e8e8e8"/><rect x="932" y="123" width="5" height="1.500" fill="#e8e8e8"/><path d="M937 124h5l-2.5 3z" fill="#e8e8e8"/><rect x="714" y="678" width="2" height="1.500" fill="#e8e8e8"/><rect x="717" y="678" width="8" height="1.500" fill="#e8e8e8"/><rect x="714" y="681" width="2" height="1.500" fill="#e8e8e8"/><rect x="717" y="681" width="8" height="1.500" fill="#e8e8e8"/><rect x="714" y="684" width="2" height="1.500" fill="#e8e8e8"/><rect x="717" y="684" width="5" height="1.500" fill="#e8e8e8"/><path d="M722 685h5l-2.5 3z" fill="#e8e8e8"/><g transform="translate(746 162)"><defs><linearGradient id="dk" x1="0" y1="0" x2="1" y2="1"><stop offset="0" stop-color="#7fb2f0"/><stop offset=".5" stop-color="#2f6fd8"/><stop offset="1" stop-color="#1a3f9a"/></linearGradient></defs><rect x=".5" y=".5" width="14" height="10" fill="url(#dk)" stroke="#8aa0c0" stroke-width=".8"/><rect x=".5" y="8.300" width="14" height="2.200" fill="#30343c"/><rect x="1.500" y="8.800" width="2" height="1.200" fill="#7fd07f"/></g><g transform="translate(760.5 186)"><defs><linearGradient id="dk" x1="0" y1="0" x2="1" y2="1"><stop offset="0" stop-color="#7fb2f0"/><stop offset=".5" stop-color="#2f6fd8"/><stop offset="1" stop-color="#1a3f9a"/></linearGradient></defs><rect x=".5" y=".5" width="14" height="10" fill="url(#dk)" stroke="#8aa0c0" stroke-width=".8"/><rect x=".5" y="8.300" width="14" height="2.200" fill="#30343c"/><rect x="1.500" y="8.800" width="2" height="1.200" fill="#7fd07f"/></g><path d="M766.500 200v55" stroke="#8a8a8a" stroke-width="1" stroke-dasharray="1 1"/><path d="M771 209.5H779" stroke="#8a8a8a" stroke-width="1" stroke-dasharray="1 1"/><path d="M771 226.5H779" stroke="#8a8a8a" stroke-width="1" stroke-dasharray="1 1"/><path d="M767 243.5H779" stroke="#8a8a8a" stroke-width="1" stroke-dasharray="1 1"/><path d="M771 260.5H779" stroke="#8a8a8a" stroke-width="1" stroke-dasharray="1 1"/><rect x="745.5" y="187.5" width="8" height="8" fill="#fff" stroke="#848484"/><rect x="747" y="191" width="5" height="1" fill="#000"/><rect x="762.5" y="205.5" width="8" height="8" fill="#fff" stroke="#848484"/><rect x="764" y="209" width="5" height="1" fill="#000"/><rect x="766" y="207" width="1" height="5" fill="#000"/><rect x="762.5" y="222.5" width="8" height="8" fill="#fff" stroke="#848484"/><rect x="764" y="226" width="5" height="1" fill="#000"/><rect x="766" y="224" width="1" height="5" fill="#000"/><rect x="762.5" y="256.5" width="8" height="8" fill="#fff" stroke="#848484"/><rect x="764" y="260" width="5" height="1" fill="#000"/><rect x="766" y="258" width="1" height="5" fill="#000"/><g transform="translate(780 201.5)"><rect x="0" y="4" width="2.500" height="8.500" fill="#d8d8d8" stroke="#8a8a8a" stroke-width=".7"/><rect x="3.500" y=".6" width="11.500" height="8.800" fill="#1f4fd0" stroke="#c8d0dc" stroke-width="1.200"/><path d="M4.500 1.500h5l-5 5z" fill="#6fa0f0"/><rect x="7.500" y="10" width="3.500" height="1.500" fill="#9a9a9a"/><rect x="5" y="11.500" width="8.500" height="1.500" fill="#c4c4c4" stroke="#8a8a8a" stroke-width=".5"/></g><g transform="translate(780 217.5)"><circle cx="5" cy="5" r="4.800" fill="#2f8fd8"/><path d="M2 3q2-2.500 4-1.500l.5 2-2 1.500.5 2.500-2 .5z" fill="#4fc04a"/><rect x="6.500" y="5.500" width="9" height="7" fill="#1f4fd0" stroke="#c8d0dc" stroke-width="1"/><path d="M7.500 6.500h4l-4 4z" fill="#6fa0f0"/><rect x="9.500" y="13" width="3" height="1.500" fill="#8a8a8a"/><rect x="7.500" y="14.500" width="7" height="1.200" fill="#b4b4b4"/></g><g transform="translate(780 235)"><rect x=".5" y=".5" width="7.500" height="6" fill="#1f2f9a" stroke="#222" stroke-width="1"/><rect x="1.500" y="1.500" width="3" height="2" fill="#6f9ff0"/><rect x="6" y="4.500" width="9" height="7" fill="#d8dcd8" stroke="#222" stroke-width="1"/><rect x="7.500" y="6" width="6" height="4" fill="#2f7f7f"/><rect x="4.500" y="12" width="11" height="2" fill="#c4c4c4" stroke="#222" stroke-width=".8"/><path d="M1 9h4M1 11h4" stroke="#222" stroke-width="1"/><circle cx="2.500" cy="13" r="1.300" fill="#d8c020"/></g><g transform="translate(780 252.5)"><g transform="scale(1.0)"><path d="M.6 2.200Q.6 .7 2 .7h4l1.500 1.800h6.500q1.400 0 1.400 1.400v7q0 1.200-1.400 1.200h-12q-1.400 0-1.400-1.200z" fill="#e8c84a" stroke="#9a7a10" stroke-width=".9"/><path d="M1.500 4.800h13v5.800q0 1-1 1h-11q-1 0-1-1z" fill="#fbe88a"/></g></g><defs><radialGradient id="gi2" cx="40%" cy="30%" r="75%"><stop offset="0" stop-color="#b4e86a"/><stop offset=".6" stop-color="#5aa82a"/><stop offset="1" stop-color="#2f7a12"/></radialGradient></defs><circle cx="747.500" cy="779.500" r="7.800" fill="url(#gi2)" stroke="#3a7a1a" stroke-width=".6"/><path d="M749.800 775.200l-1.500 6q-.6 1.800-2.500 1.400-1.600-.5-1.100-2 .6-1.500 2.300-1.500h1.800" fill="none" stroke="#f0fad8" stroke-width="1.400" stroke-linecap="round"/></svg></body></html>
